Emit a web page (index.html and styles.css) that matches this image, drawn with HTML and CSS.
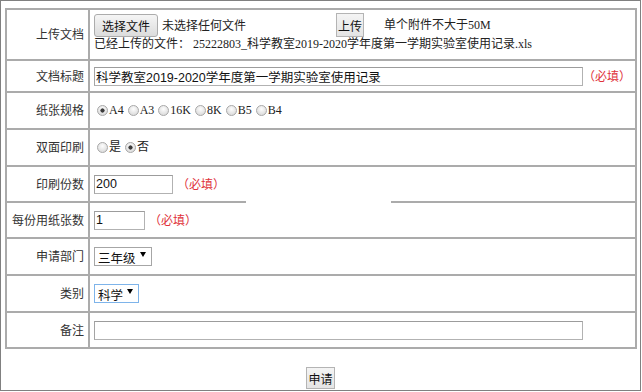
FILE: index.html
```html
<!DOCTYPE html>
<html lang="zh-CN">
<head>
<meta charset="utf-8">
<title>文档上传</title>
<link rel="stylesheet" href="styles.css">
</head>
<body>
<div class="frame">
  <table class="form">
    <tr class="h51">
      <td class="lbl">上传文档</td>
      <td class="val top">
        <div class="upload-line">
          <span class="file"><button class="btn-file" type="button">选择文件</button><span class="file-name">未选择任何文件</span></span>
          <button class="btn" type="button">上传</button>
          <span class="ss hint">单个附件不大于50M</span>
        </div>
        <div class="ss uploaded">已经上传的文件： 25222803_科学教室2019-2020学年度第一学期实验室使用记录.xls</div>
      </td>
    </tr>
    <tr class="h32">
      <td class="lbl">文档标题</td>
      <td class="val"><div class="field"><input class="txt w-wide" type="text" value="科学教室2019-2020学年度第一学期实验室使用记录"><span class="req req-tight">（必填）</span></div></td>
    </tr>
    <tr class="h37">
      <td class="lbl">纸张规格</td>
      <td class="val"><div class="field ss">
        <input class="radio first" type="radio" name="size" checked><span>A4</span>
        <input class="radio" type="radio" name="size"><span>A3</span>
        <input class="radio" type="radio" name="size"><span>16K</span>
        <input class="radio" type="radio" name="size"><span>8K</span>
        <input class="radio" type="radio" name="size"><span>B5</span>
        <input class="radio" type="radio" name="size"><span>B4</span>
      </div></td>
    </tr>
    <tr class="h37">
      <td class="lbl">双面印刷</td>
      <td class="val"><div class="field ss">
        <input class="radio first" type="radio" name="duplex"><span>是</span>
        <input class="radio" type="radio" name="duplex" checked><span>否</span>
      </div></td>
    </tr>
    <tr class="h36">
      <td class="lbl">印刷份数</td>
      <td class="val"><div class="field"><input class="txt w-copies" type="text" value="200"><span class="req">（必填）</span></div></td>
    </tr>
    <tr class="h36">
      <td class="lbl">每份用纸张数</td>
      <td class="val"><div class="field"><input class="txt w-pages" type="text" value="1"><span class="req">（必填）</span></div></td>
    </tr>
    <tr class="h37">
      <td class="lbl">申请部门</td>
      <td class="val"><div class="field"><span class="sel"><select class="w-dept"><option>三年级</option></select></span></div></td>
    </tr>
    <tr class="h37">
      <td class="lbl">类别</td>
      <td class="val"><div class="field"><span class="sel"><select class="w-cat focus"><option>科学</option></select></span></div></td>
    </tr>
    <tr class="h36">
      <td class="lbl">备注</td>
      <td class="val"><div class="field"><input class="txt w-wide" type="text" value=""></div></td>
    </tr>
  </table>
  <div class="actions"><button class="btn" type="button">申请</button></div>
  <div class="mask"></div>
</div>
</body>
</html>
```
FILE: styles.css
```css
* { box-sizing: border-box; }
html, body { margin: 0; padding: 0; background: #fff; }
body {
  font: 12px/1.2 "Noto Sans CJK SC", sans-serif;
  color: #222;
}
.frame {
  position: relative;
  width: 641px;
  height: 391px;
  border: 1px solid #808080;
  padding: 7px 0 0 4px;
}
.form {
  border: 1px solid #ababab;
  border-spacing: 0;
  width: 632px;
  table-layout: fixed;
}
.form td {
  border: 1px solid #ababab;
  padding: 0 4px;
  vertical-align: middle;
}
.form td.top { vertical-align: top; padding-top: 3px; }
.h51 td { height: 51px; }
.h32 td { height: 32px; }
.h37 td { height: 37px; }
.h36 td { height: 36px; }
.lbl {
  width: 83px;
  text-align: right;
  color: #333;
  white-space: nowrap;
}
.ss { font-family: "Liberation Serif", "Noto Sans CJK SC", serif; }
.field { display: flex; align-items: center; }

/* upload row */
.upload-line { display: flex; align-items: center; height: 24px; }
.file { display: flex; align-items: center; width: 240px; flex: none; }
.btn-file {
  height: 23px;
  padding: 0 7px;
  border: 1px solid #acacac;
  border-radius: 3px;
  background: linear-gradient(#f5f5f5, #dcdcdc);
  font: 12px "Noto Sans CJK SC", sans-serif;
  color: #111;
}
.file-name { margin-left: 4px; color: #222; }
.btn {
  height: 24px;
  padding: 0 1px;
  margin-left: 2px;
  border: 1px solid #b4b4b4;
  border-radius: 0;
  background: linear-gradient(#f4f4f4, #e4e4e4);
  font: 12px "Noto Sans CJK SC", sans-serif;
  color: #111;
}
.hint { margin-left: 20px; }
.uploaded { line-height: 14px; height: 14px; white-space: nowrap; }

/* inputs */
.txt {
  height: 19px;
  padding: 0 1px;
  border: 1px solid #b2b2b2;
  border-top-color: #9c9c9c;
  border-left-color: #a4a4a4;
  background: #fff;
  font: 12.5px "Liberation Sans", "Noto Sans CJK SC", sans-serif;
  color: #111;
}
.w-wide { width: 489px; }
.w-copies { width: 79px; }
.w-pages { width: 51px; }
.req { color: #e0323a; margin-left: 4px; }
.req-tight { margin-left: 0; }

/* radios */
.radio {
  -webkit-appearance: none;
  appearance: none;
  width: 11px;
  height: 11px;
  margin: 0 1px 0 4px;
  border: 1px solid #a8a8a8;
  border-radius: 50%;
  background: radial-gradient(circle at 50% 35%, #fdfdfd, #d3d3d3);
  flex: none;
}
.radio.first { margin-left: 3px; }
.radio:checked {
  background:
    radial-gradient(circle, #3c3c3c 0 1.8px, transparent 2.4px),
    radial-gradient(circle at 50% 35%, #fdfdfd, #d3d3d3);
}

/* selects */
.sel { position: relative; display: inline-block; }
.sel::after {
  content: "";
  position: absolute;
  right: 6px;
  top: 5px;
  border-left: 3px solid transparent;
  border-right: 3px solid transparent;
  border-top: 5px solid #000;
  pointer-events: none;
}
.sel select {
  -webkit-appearance: none;
  appearance: none;
  display: block;
  height: 19px;
  padding: 0 0 0 3px;
  border: 1px solid #a6a6a6;
  border-radius: 0;
  background: #fff;
  font: 12.5px "Noto Sans CJK SC", sans-serif;
  color: #111;
}
.w-dept { width: 58px; }
.w-cat { width: 45px; }
.sel select.focus { border-color: #7eb4ea; }

.actions { margin: 18px 0 0 -4px; text-align: center; }
.actions .btn { height: 22px; margin: 0; }

.mask {
  position: absolute;
  left: 245px;
  top: 196px;
  width: 145px;
  height: 10px;
  background: #fff;
}
```
